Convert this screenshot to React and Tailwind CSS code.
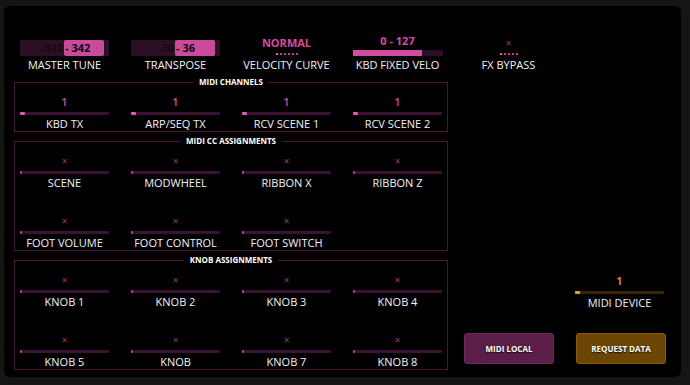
import React from "react";

const Cell = ({ value, label, x, orange }) => (
  <div className="flex w-[89px] flex-col">
    <div
      className={
        "h-[12px] text-center leading-[12px] " +
        (x
          ? "text-[10px] text-[#9c3a82]"
          : orange
          ? "text-[11px] font-semibold text-[#e8a317]"
          : "text-[11px] font-semibold text-[#d64ba0]")
      }
    >
      {x ? "×" : value}
    </div>
    <div
      className={
        "mt-[4px] flex h-[3px] w-full rounded-[1px] " +
        (orange ? "bg-[#3a2506]" : "bg-[#3b1232]")
      }
    >
      <div
        className={
          "h-full rounded-[1px] " +
          (x ? "w-[2px] bg-[#c0408f]" : orange ? "w-[5px] bg-[#e8a317]" : "w-[5px] bg-[#e05aaa]")
        }
      />
    </div>
    <div className="mt-[2px] h-[14px] whitespace-nowrap text-center text-[11px] leading-[14px] text-[#f2f2f2]">
      {label}
    </div>
  </div>
);

const Section = ({ title, rows }) => (
  <div className="relative border border-[#46163b] px-[5px] pt-[13px]">
    <div className="absolute left-1/2 top-[-6px] -translate-x-1/2 bg-black px-[6px] text-[8px] font-bold leading-[10px] whitespace-nowrap text-white">
      {title}
    </div>
    <div className="flex flex-col gap-[25px]">
      {rows.map((row, i) => (
        <div key={i} className="flex gap-[22px]">
          {row.map((c, j) => (
            <Cell key={j} {...c} />
          ))}
        </div>
      ))}
    </div>
  </div>
);

const Dots = ({ n }) => (
  <div className="flex justify-center gap-[2px]">
    {Array.from({ length: n }).map((_, i) => (
      <div key={i} className={"h-[2px] w-[2px] " + (i === 0 ? "bg-[#e860b4]" : "bg-[#c0408f]")} />
    ))}
  </div>
);

const Stepper = ({ left, right }) => (
  <div className="mt-[6px] flex h-[16px] w-[89px] rounded-[2px] bg-[#2c0e25] text-[11px] font-bold leading-[16px]">
    <div className="w-[44px] pr-[1px] text-right text-[#160810]">{left}</div>
    <div className="w-[40px] rounded-[2px] bg-[#c94b9b] pl-[1px] text-[#12040d]">- {right}</div>
  </div>
);

export default function App() {
  const x = { x: true };
  return (
    <div className="min-h-screen w-full bg-[#151515] pl-[4px] pt-[6px] font-['Open_Sans',sans-serif]">
      <div className="h-[371px] w-[677px] rounded-[6px] bg-black px-[10px] pt-[28px]">
        {/* top row */}
        <div className="flex gap-[22px] pl-[6px]">
          <div className="flex w-[89px] flex-col">
            <div className="h-[22px]">
              <Stepper left="-342" right="342" />
            </div>
            <div className="mt-[2px] h-[14px] text-center text-[11px] leading-[14px] text-[#f2f2f2]">MASTER TUNE</div>
          </div>
          <div className="flex w-[89px] flex-col">
            <div className="h-[22px]">
              <Stepper left="-36" right="36" />
            </div>
            <div className="mt-[2px] h-[14px] text-center text-[11px] leading-[14px] text-[#f2f2f2]">TRANSPOSE</div>
          </div>
          <div className="flex w-[89px] flex-col">
            <div className="h-[22px] pt-[3px]">
              <div className="h-[12px] text-center text-[11px] font-bold leading-[12px] text-[#d64ba0]">NORMAL</div>
              <div className="mt-[4px]">
                <Dots n={6} />
              </div>
            </div>
            <div className="mt-[2px] h-[14px] whitespace-nowrap text-center text-[11px] leading-[14px] text-[#f2f2f2]">VELOCITY CURVE</div>
          </div>
          <div className="flex w-[89px] flex-col">
            <div className="h-[22px] pt-[1px]">
              <div className="h-[12px] text-center text-[11px] font-bold leading-[12px] text-[#d64ba0]">0 - 127</div>
              <div className="mt-[3px] flex h-[6px] w-[90px] bg-[#2c0e25]">
                <div className="h-full w-[69px] bg-[#cf4e9e]" />
              </div>
            </div>
            <div className="mt-[2px] h-[14px] whitespace-nowrap text-center text-[11px] leading-[14px] text-[#f2f2f2]">KBD FIXED VELO</div>
          </div>
          <div className="flex w-[89px] flex-col">
            <div className="h-[22px] pt-[3px]">
              <div className="h-[12px] text-center text-[10px] leading-[12px] text-[#9c3a82]">×</div>
              <div className="mt-[4px]">
                <Dots n={5} />
              </div>
            </div>
            <div className="mt-[2px] h-[14px] text-center text-[11px] leading-[14px] text-[#f2f2f2]">FX BYPASS</div>
          </div>
        </div>

        {/* body */}
        <div className="mt-[10px] flex">
          <div className="flex w-[434px] flex-col gap-[9px]">
            <Section
              title="MIDI CHANNELS"
              rows={[
                [
                  { value: "1", label: "KBD TX" },
                  { value: "1", label: "ARP/SEQ TX" },
                  { value: "1", label: "RCV SCENE 1" },
                  { value: "1", label: "RCV SCENE 2" },
                ],
              ]}
            />
            <Section
              title="MIDI CC ASSIGNMENTS"
              rows={[
                [
                  { ...x, label: "SCENE" },
                  { ...x, label: "MODWHEEL" },
                  { ...x, label: "RIBBON X" },
                  { ...x, label: "RIBBON Z" },
                ],
                [
                  { ...x, label: "FOOT VOLUME" },
                  { ...x, label: "FOOT CONTROL" },
                  { ...x, label: "FOOT SWITCH" },
                ],
              ]}
            />
            <Section
              title="KNOB ASSIGNMENTS"
              rows={[
                [
                  { ...x, label: "KNOB 1" },
                  { ...x, label: "KNOB 2" },
                  { ...x, label: "KNOB 3" },
                  { ...x, label: "KNOB 4" },
                ],
                [
                  { ...x, label: "KNOB 5" },
                  { ...x, label: "KNOB" },
                  { ...x, label: "KNOB 7" },
                  { ...x, label: "KNOB 8" },
                ],
              ]}
            />
          </div>
          <div className="ml-[16px] flex flex-col pt-[193px]">
            <div className="ml-[111px]">
              <Cell value="1" label="MIDI DEVICE" orange />
            </div>
            <div className="mt-[23px] flex gap-[22px]">
              <button className="h-[31px] w-[90px] rounded-[3px] border border-[#6c2a5b] bg-[#5a1e48] text-[8px] font-bold text-white [text-shadow:0_1px_1px_rgba(0,0,0,0.8)]">
                MIDI LOCAL
              </button>
              <button className="h-[31px] w-[90px] rounded-[3px] border border-[#8a5a0a] bg-[#6b4502] text-[8px] font-bold text-white [text-shadow:0_1px_1px_rgba(0,0,0,0.8)]">
                REQUEST DATA
              </button>
            </div>
          </div>
        </div>
      </div>
    </div>
  );
}
